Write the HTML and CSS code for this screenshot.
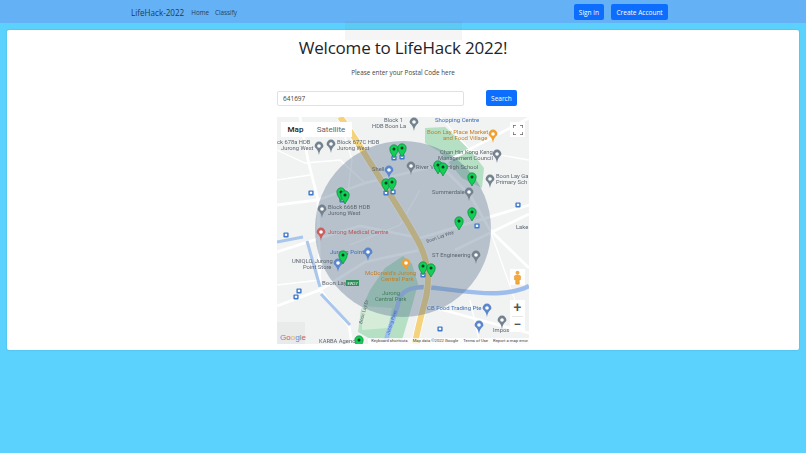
FILE: index.html

```html
<!DOCTYPE html>
<html lang="en">
<head>
  <meta charset="UTF-8">
  <title>LifeHack-2022</title>
  <link rel="stylesheet" href="styles.css">
</head>
<body>
  <nav class="navbar">
    <a class="brand" href="#">LifeHack-2022</a>
    <a class="nav-link" href="#">Home</a>
    <a class="nav-link" href="#">Classify</a>
    <div class="nav-actions">
      <button class="btn">Sign in</button>
      <button class="btn">Create Account</button>
    </div>
  </nav>
  <div class="ghost"></div>

  <main class="card">
    <h1>Welcome to LifeHack 2022!</h1>
    <p class="intro">Please enter your Postal Code here</p>
    <form class="search-row">
      <input class="postal" type="text" value="641697">
      <button class="btn" type="button">Search</button>
    </form>

    <div class="map">
      <svg class="map-canvas" viewBox="277 117 252 227" width="252" height="227">
        <defs>
          <g id="pin">
            <path d="M0 0C-1.2-3-4.2-5-4.2-9a4.2 4.2 0 0 1 8.4 0C4.2-5 1.2-3 0 0Z" fill="#12cf55" stroke="#0a7a38" stroke-width=".6"/>
            <circle cy="-9" r="1.5" fill="#0c3a22"/>
          </g>
          <g id="bus">
            <rect x="-2.6" y="-2.6" width="5.2" height="5.2" rx="1" fill="#3f78c8"/>
            <rect x="-1.2" y="-1.3" width="2.4" height="2.2" fill="#fff"/>
          </g>
          <g id="poi" transform="translate(0 3)">
            <path d="M0 7C-1 0-4.4 .5-4.4-2a4.4 4.4 0 0 1 8.8 0C4.4 .5 1 0 0 7Z"/>
            <circle cy="-2" r="1.8" fill="#fff"/>
          </g>
        </defs>

        <!-- ground -->
        <rect x="277" y="117" width="252" height="227" fill="#f1f2f2"/>
        <path class="park" d="M425 128L445 127L470 150L484 168L482 188L462 178L440 152L425 143Z"/>
        <path class="park" d="M403 256L385 268L370 290L361 310L358 332L372 340L402 340L412 306L418 284L412 264Z"/>
        <path class="park-light" d="M362 306L392 308L388 328L362 330Z"/>
        <path class="block" d="M277 322H305V344H277Z"/>

        <!-- roads -->
        <g class="road">
          <path d="M277 205L318 200L365 183L440 165L529 118"/>
          <path d="M277 252L320 238L360 226L420 238L529 205"/>
          <path d="M320 290L365 262L420 250"/>
          <path d="M277 306L320 290L349 326L352 344"/>
          <path d="M300 117L308 160L318 200L320 290"/>
          <path d="M440 165L470 195L490 230L529 268"/>
          <path d="M425 305L480 320L529 333"/>
          <path d="M455 250L529 214"/>
        </g>
        <g class="road-thin">
          <path d="M277 150L305 163L340 160L365 183"/>
          <path d="M340 120L352 160L345 215"/>
          <path d="M350 245L400 225L420 190"/>
          <path d="M440 117L470 150L529 160"/>
          <path d="M490 230L515 300"/>
          <path d="M277 180L310 175"/>
          <path d="M277 285L320 280"/>
          <path d="M470 300L480 344"/>
        </g>

        <!-- expressway and water -->
        <path class="river" d="M386 340C390 325 396 315 399 300C401 292 410 287 425 287C450 289 480 295 500 293C512 292 522 290 529 286"/>
        <path class="canal" d="M277 242L303 237M307 241L320 287M321 294L350 325"/>
        <path class="expressway-edge" d="M340 117C352 132 362 150 378 175C392 198 408 222 420 245C430 266 430 285 424 305C420 320 417 332 415 344"/>
        <path class="expressway" d="M340 117C352 132 362 150 378 175C392 198 408 222 420 245C430 266 430 285 424 305C420 320 417 332 415 344"/>

        <circle class="radius" cx="403" cy="229" r="88"/>

        <!-- places -->
        <g class="poi-grey">
          <use href="#poi" x="319" y="145"/><use href="#poi" x="331" y="143"/><use href="#poi" x="322" y="208"/>
          <use href="#poi" x="414" y="121"/><use href="#poi" x="497" y="153"/><use href="#poi" x="411" y="165"/>
          <use href="#poi" x="490" y="178"/><use href="#poi" x="469" y="191"/><use href="#poi" x="476" y="254"/>
          <use href="#poi" x="502" y="319"/>
        </g>
        <g class="poi-blue">
          <use href="#poi" x="389" y="169"/><use href="#poi" x="479" y="324"/><use href="#poi" x="487" y="307"/>
          <use href="#poi" x="368" y="251"/><use href="#poi" x="338" y="262"/>
        </g>
        <g class="poi-orange"><use href="#poi" x="493" y="133"/><use href="#poi" x="406" y="262"/></g>
        <g class="poi-red"><use href="#poi" x="321" y="231"/></g>

        <g class="labels">
          <text x="277" y="144">ck 678a HDB</text>
          <text x="281" y="150">Jurong West</text>
          <text x="337" y="144">Block 677C HDB</text>
          <text x="337" y="150">Jurong West</text>
          <text x="384" y="122">Block 1</text>
          <text x="372" y="128">HDB Boon La</text>
          <text x="372" y="171">Shell</text>
          <text x="328" y="209">Block 666B HDB</text>
          <text x="328" y="215">Jurong West</text>
          <text x="416" y="169">River Valley High School</text>
          <text x="438" y="160">Management Council</text>
          <text x="440" y="154">Chan Hin Kong Keng</text>
          <text x="432" y="194">Summerdale</text>
          <text x="496" y="178">Boon Lay Ga</text>
          <text x="496" y="184">Primary Sch</text>
          <text x="432" y="257">ST Engineering</text>
          <text x="292" y="263">UNIQLO, Jurong</text>
          <text x="303" y="269">Point Store</text>
          <text x="516" y="229">Lake</text>
          <text x="382" y="295" class="green">Jurong</text>
          <text x="375" y="301" class="green">Central Park</text>
          <text x="319" y="343">KARBA Agency</text>
          <text x="493" y="332">Impos</text>
        </g>
        <g class="labels-big">
          <text x="435" y="122" class="blue">Shopping Centre</text>
          <text x="427" y="134" class="orange">Boon Lay Place Market</text>
          <text x="443" y="140" class="orange">and Food Village</text>
          <text x="328" y="234" class="red">Jurong Medical Centre</text>
          <text x="330" y="254" class="blue">Jurong Point</text>
          <text x="365" y="275" class="orange">McDonald's Jurong</text>
          <text x="381" y="281" class="orange">Central Park</text>
          <text x="427" y="310" class="blue">CB Food Trading Pte</text>
          <text x="322" y="285">Boon Lay</text>
        </g>
        <g class="roadname">
          <text transform="translate(427 243) rotate(-20)">Boon Lay Way</text>
          <text transform="translate(362 324) rotate(-75)">Boon Lay Dr</text>
          <text transform="translate(389 335) rotate(-72)" class="river-name">Jurong River</text>
        </g>
        <rect x="346" y="280" width="13" height="6" fill="#2f8f5b"/>
        <text x="347.500" y="285" class="mrt">EW27</text>

        <g>
          <use href="#bus" x="394" y="158"/><use href="#bus" x="402" y="157"/><use href="#bus" x="386" y="193"/>
          <use href="#bus" x="393" y="192"/><use href="#bus" x="311" y="193"/><use href="#bus" x="342" y="200"/>
          <use href="#bus" x="518" y="205"/><use href="#bus" x="477" y="226"/><use href="#bus" x="286" y="235"/>
          <use href="#bus" x="299" y="291"/><use href="#bus" x="296" y="297"/><use href="#bus" x="423" y="275"/>
          <use href="#bus" x="440" y="329"/>
        </g>

        <!-- search results -->
        <g transform="translate(0 -1)">
          <use href="#pin" x="394" y="159"/><use href="#pin" x="402" y="158"/><use href="#pin" x="438" y="175"/>
          <use href="#pin" x="443" y="177"/><use href="#pin" x="472" y="187"/><use href="#pin" x="472" y="222"/>
          <use href="#pin" x="459" y="231"/><use href="#pin" x="386" y="193"/><use href="#pin" x="392" y="192"/>
          <use href="#pin" x="341" y="202"/><use href="#pin" x="345" y="205"/><use href="#pin" x="343" y="265"/>
          <use href="#pin" x="423" y="276"/><use href="#pin" x="431" y="278"/><use href="#pin" x="359" y="350"/>
        </g>
      </svg>

      <div class="map-type">
        <span class="map-tab active">Map</span>
        <span class="map-tab">Satellite</span>
      </div>
      <button class="map-ctl fullscreen" type="button" aria-label="Toggle fullscreen">
        <svg viewBox="0 0 10 10" width="10" height="10"><path d="M0 3V0H3M7 0H10V3M10 7V10H7M3 10H0V7" fill="none" stroke="#666" stroke-width="1.4"/></svg>
      </button>
      <button class="map-ctl pegman" type="button" aria-label="Street View">
        <svg viewBox="0 0 10 16" width="9" height="15"><circle cx="5" cy="2.6" r="2.2" fill="#f4a93a"/><path d="M1.6 6.2Q5 4 8.4 6.2V10.4H7V15.4H3V10.4H1.6Z" fill="#f4a93a" stroke="#c77c16" stroke-width=".4"/></svg>
      </button>
      <div class="zoom-ctl">
        <span class="zoom-btn">+</span>
        <span class="zoom-line"></span>
        <span class="zoom-btn">−</span>
      </div>
      <span class="google-logo"><b class="g-b">G</b><b class="g-r">o</b><b class="g-y">o</b><b class="g-b">g</b><b class="g-g">l</b><b class="g-r">e</b></span>
      <div class="attribution">
        <span>Keyboard shortcuts</span>
        <span>Map data ©2022 Google</span>
        <span>Terms of Use</span>
        <span>Report a map error</span>
      </div>
    </div>
  </main>
</body>
</html>
```

FILE: styles.css

```css
html, body {
  margin: 0;
  padding: 0;
  width: 806px;
  height: 453px;
  overflow: hidden;
  background-color: #5bd2fd;
  font-family: "Open Sans", "Noto Sans", sans-serif;
  color: #212529;
}
.navbar {
  height: 23px;
  display: flex;
  align-items: center;
  gap: 6px;
  padding: 1px 138px 0 131px;
  box-sizing: border-box;
  background-color: #64b2f5;
}
.brand {
  font-size: 8.1px;
  color: #1d3a55;
  text-decoration: none;
  margin-right: 1px;
}
.nav-link {
  font-size: 6.3px;
  color: #1d3f66;
  text-decoration: none;
}
.nav-actions {
  margin-left: auto;
  display: flex;
  gap: 7px;
}
.btn {
  height: 16px;
  padding: 0 5.3px;
  border: 0;
  border-radius: 2px;
  background-color: #0d6efd;
  color: #fff;
  font-family: inherit;
  font-size: 6.5px;
}
.ghost {
  position: absolute;
  left: 345px;
  top: 21px;
  width: 117px;
  height: 19px;
  background-color: rgba(120, 120, 120, 0.07);
}
.card {
  margin: 7px 7px 0;
  height: 320px;
  display: flex;
  flex-direction: column;
  align-items: center;
  background-color: #fff;
  border-radius: 2px;
  box-shadow: 0 0 2px rgba(0, 0, 0, 0.2);
}
h1 {
  margin: 7px 0 0;
  font-size: 17px;
  line-height: 22px;
  font-weight: 500;
  letter-spacing: -0.2px;
}
.intro {
  margin: 9px 0 0;
  font-size: 6.35px;
  line-height: 9px;
  color: #444;
}
.search-row {
  width: 240px;
  margin: 13px 0 0 -12px;
  display: flex;
  justify-content: space-between;
  align-items: flex-end;
}
.postal {
  width: 187px;
  height: 15px;
  padding: 0 5px;
  box-sizing: border-box;
  border: 1px solid #dee2e6;
  border-radius: 2px;
  font-family: inherit;
  font-size: 6.5px;
  color: #444;
}
.map {
  position: relative;
  width: 252px;
  height: 227px;
  margin-top: 11px;
  overflow: hidden;
  background-color: #f1f2f2;
}
.map-canvas {
  display: block;
  filter: blur(0.3px);
}
.park { fill: #b5e0c3; }
.park-light { fill: #d5ecd9; }
.block { fill: #e9eaea; }
.road path, .road-thin path, .river, .canal, .expressway, .expressway-edge { fill: none; }
.road path { stroke: #fff; stroke-width: 2.8; }
.road-thin path { stroke: #fff; stroke-width: 1.3; }
.river { stroke: #9dbdec; stroke-width: 4.5; }
.canal { stroke: #a9c6ec; stroke-width: 3; }
.expressway-edge { stroke: #fff; stroke-width: 7.5; }
.expressway { stroke: #f5d27c; stroke-width: 6; }
.radius { fill: #56708f; fill-opacity: 0.38; }
.poi-grey { fill: #74828f; }
.poi-blue { fill: #5a86cc; }
.poi-orange { fill: #f0a030; }
.poi-red { fill: #c9605f; }
.labels text, .labels-big text {
  font-family: Roboto, sans-serif;
  fill: #5c6670;
}
.labels text { font-size: 5.8px; }
.labels-big text { font-size: 6px; }
.labels .green { fill: #3f7d57; }
.labels-big .blue { fill: #3f6fb5; }
.labels-big .orange { fill: #c77f22; }
.labels-big .red { fill: #b65a5a; }
.roadname text {
  font-family: Roboto, sans-serif;
  font-size: 4.6px;
  fill: #56606a;
}
.roadname .river-name { fill: #3a6fc0; }
.mrt {
  font-family: Roboto, sans-serif;
  font-size: 4px;
  fill: #fff;
}
.map-type {
  position: absolute;
  left: 4px;
  top: 5px;
  width: 71px;
  height: 15px;
  display: flex;
  background-color: #fff;
}
.map-tab {
  flex: 1;
  font-family: Roboto, sans-serif;
  font-size: 8px;
  line-height: 15px;
  text-align: center;
  color: #666;
}
.map-tab.active {
  flex: 0 0 29px;
  color: #222;
  font-weight: 500;
}
.map-ctl {
  position: absolute;
  left: 233px;
  width: 15px;
  padding: 0;
  display: flex;
  align-items: center;
  justify-content: center;
  border: 0;
  background-color: #fff;
}
.fullscreen {
  top: 5px;
  height: 15px;
}
.pegman {
  top: 152px;
  height: 16px;
}
.zoom-ctl {
  position: absolute;
  left: 233px;
  top: 183px;
  width: 15px;
  height: 32px;
  display: flex;
  flex-direction: column;
  align-items: center;
  background-color: #fff;
}
.zoom-btn {
  flex: 1;
  font-family: Roboto, sans-serif;
  font-size: 14px;
  font-weight: 500;
  line-height: 15px;
  color: #555;
}
.zoom-line {
  width: 11px;
  height: 1px;
  background-color: #e6e6e6;
}
.google-logo {
  position: absolute;
  left: 3px;
  bottom: 2px;
  font-family: "Liberation Sans", sans-serif;
  font-size: 8px;
}
.google-logo b { font-weight: 400; }
.g-b { color: #5a8fe0; }
.g-r { color: #d8584c; }
.g-y { color: #e6b73e; }
.g-g { color: #5aa667; }
.attribution {
  position: absolute;
  right: 0;
  bottom: 0;
  height: 6px;
  display: flex;
  gap: 5px;
  padding: 0 1px 0 3px;
  background-color: rgba(255, 255, 255, 0.75);
  font-family: Roboto, sans-serif;
  font-size: 4.2px;
  line-height: 6px;
  color: #444;
}
```
